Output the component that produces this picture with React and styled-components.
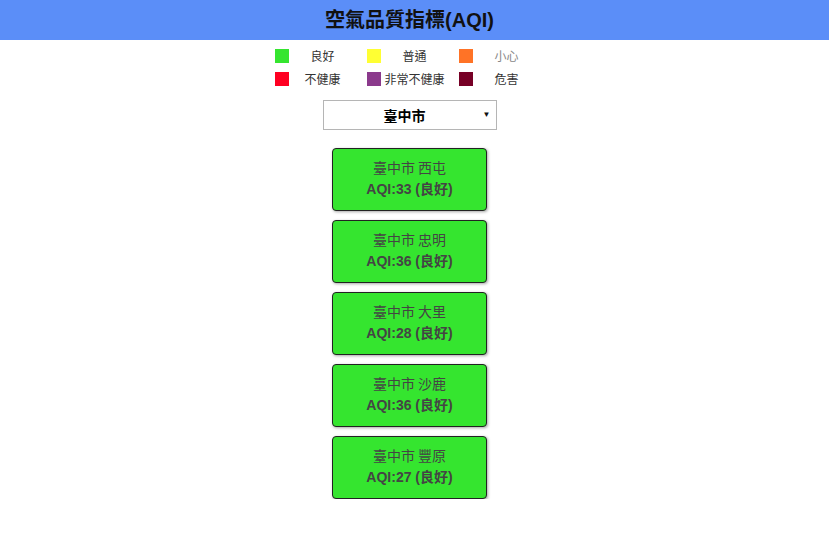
import React, { useState } from 'react'
import styled, { createGlobalStyle } from 'styled-components'

const GlobalStyle = createGlobalStyle`
  body {
    margin: 0;
    font-family: "Liberation Sans", Arial, "Noto Sans CJK TC", sans-serif;
    background: #fff;
  }
`

const legend = [
  { label: '良好', color: '#35e52f' },
  { label: '普通', color: '#ffff33' },
  { label: '小心', color: '#ff7326', light: true },
  { label: '不健康', color: '#ff0022' },
  { label: '非常不健康', color: '#8b3a8c' },
  { label: '危害', color: '#770026' },
]

const sites = [
  { name: '西屯', aqi: 33 },
  { name: '忠明', aqi: 36 },
  { name: '大里', aqi: 28 },
  { name: '沙鹿', aqi: 36 },
  { name: '豐原', aqi: 27 },
]

export default function App() {
  const [city, setCity] = useState('臺中市')

  return (
    <>
      <GlobalStyle />
      <Header>空氣品質指標(AQI)</Header>
      <Page>
        <Legend>
          {legend.map(item => (
            <LegendItem key={item.label}>
              <Swatch color={item.color} />
              <LegendLabel light={item.light}>{item.label}</LegendLabel>
            </LegendItem>
          ))}
        </Legend>
        <SelectWrap>
          <CitySelect value={city} onChange={e => setCity(e.target.value)}>
            <option>臺中市</option>
            <option>臺北市</option>
            <option>高雄市</option>
          </CitySelect>
          <Arrow>▼</Arrow>
        </SelectWrap>
        <CardList>
          {sites.map(s => (
            <Card key={s.name}>
              <CardTitle>{city} {s.name}</CardTitle>
              <CardValue>AQI:{s.aqi} (良好)</CardValue>
            </Card>
          ))}
        </CardList>
      </Page>
    </>
  )
}

const Header = styled.h1`
  margin: 0;
  height: 40px;
  line-height: 40px;
  padding-right: 10px;
  background: #5b8ef8;
  color: #111;
  text-align: center;
  font-size: 20px;
  font-weight: bold;
  font-family: "Liberation Sans", Arial, "Noto Sans CJK TC", sans-serif;
`

const Page = styled.main`
  padding-right: 10px;
`

const Legend = styled.div`
  width: 276px;
  padding-left: 6px;
  margin: 9px auto 0;
  display: grid;
  grid-template-columns: repeat(3, 92px);
  row-gap: 9px;
`

const LegendItem = styled.div`
  display: flex;
  align-items: center;
  height: 14px;
`

const Swatch = styled.span`
  width: 14px;
  height: 14px;
  flex: none;
  background: ${({ color }) => color};
`

const LegendLabel = styled.span`
  width: 68px;
  text-align: center;
  font-size: 12px;
  color: ${({ light }) => (light ? '#888' : '#333')};
  font-family: "Noto Sans CJK TC", sans-serif;
  line-height: 14px;
`

const SelectWrap = styled.div`
  position: relative;
  width: 174px;
  height: 30px;
  margin: 14px auto 0;
`

const CitySelect = styled.select`
  appearance: none;
  width: 100%;
  height: 100%;
  box-sizing: border-box;
  border: 1px solid #b5b5b5;
  background: #fff;
  text-align: center;
  text-align-last: center;
  font-size: 14px;
  font-weight: bold;
  color: #000;
  font-family: "Noto Sans CJK TC", sans-serif;
  padding: 0 10px 0 0;
  outline: none;
`

const Arrow = styled.span`
  position: absolute;
  right: 6px;
  top: 10px;
  font-size: 8px;
  color: #111;
  pointer-events: none;
`

const CardList = styled.div`
  display: flex;
  flex-direction: column;
  align-items: center;
  gap: 9px;
  margin-top: 18px;
`

const Card = styled.div`
  width: 155px;
  height: 63px;
  box-sizing: border-box;
  padding-bottom: 3px;
  border: 1px solid #222;
  border-radius: 4px;
  background: #35e52f;
  box-shadow: 1px 1px 3px rgba(0, 0, 0, 0.35);
  display: flex;
  flex-direction: column;
  align-items: center;
  justify-content: center;
  gap: 4px;
  color: #444;
  font-size: 14px;
`

const CardTitle = styled.div`
  font-family: "Noto Sans CJK TC", sans-serif;
  line-height: 18px;
`

const CardValue = styled.div`
  font-weight: bold;
  line-height: 18px;
`
